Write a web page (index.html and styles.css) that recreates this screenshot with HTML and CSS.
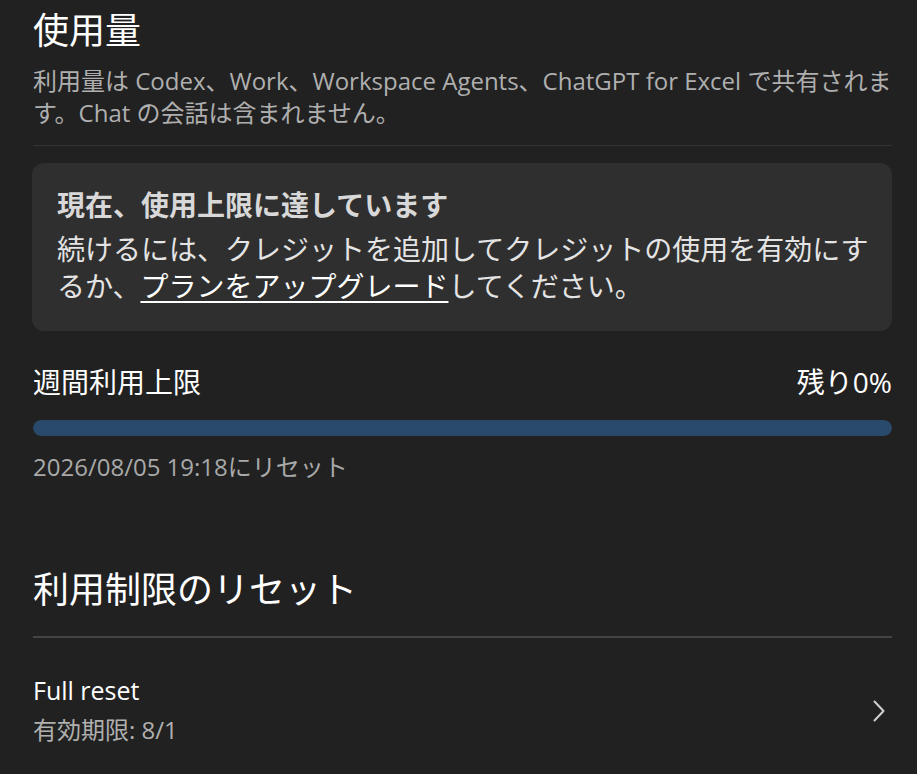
FILE: index.html
```html
<!DOCTYPE html>
<html lang="ja">
<head>
<meta charset="utf-8">
<title>使用量</title>
<link rel="stylesheet" href="styles.css">
</head>
<body>
<main class="page">
  <section class="usage">
    <h1 class="title">使用量</h1>
    <p class="desc">利用量は Codex、Work、Workspace Agents、ChatGPT for Excel で共有されます。Chat の会話は含まれません。</p>
    <hr class="divider">
    <div class="notice">
      <h2 class="notice-title">現在、使用上限に達しています</h2>
      <p class="notice-text">続けるには、クレジットを追加してクレジットの使用を有効にするか、<a class="link" href="#">プランをアップグレード</a>してください。</p>
    </div>
    <div class="limit">
      <div class="limit-head">
        <span class="limit-name">週間利用上限</span>
        <span class="limit-remaining">残り0%</span>
      </div>
      <div class="bar"><div class="bar-fill" style="width:100%"></div></div>
      <p class="limit-reset">2026/08/05 19:18にリセット</p>
    </div>
  </section>
  <section class="resets">
    <h1 class="title title-reset">利用制限のリセット</h1>
    <hr class="divider divider-strong">
    <a class="reset-row" href="#">
      <div class="reset-info">
        <div class="reset-name">Full reset</div>
        <div class="reset-exp">有効期限: 8/1</div>
      </div>
      <svg class="chevron" width="14" height="24" viewBox="0 0 14 24" aria-hidden="true"><path d="M2.5 2.5 L11.5 12 L2.5 21.5" fill="none" stroke="currentColor" stroke-width="2" stroke-linecap="round" stroke-linejoin="round"/></svg>
    </a>
  </section>
</main>
</body>
</html>
```
FILE: styles.css
```css
html, body {
  margin: 0;
  padding: 0;
  background: #212121;
}
body {
  font-family: "Open Sans", "Noto Sans CJK JP", sans-serif;
  color: #ffffff;
}
.page {
  padding: 9px 25px 0 33px;
}
.title {
  margin: 0;
  font-size: 36px;
  line-height: 44px;
  font-weight: 400;
  color: #ffffff;
}
.desc {
  margin: 12px 0 0;
  font-size: 24px;
  line-height: 32px;
  color: #afafaf;
}
.divider {
  margin: 16px 0 0;
  border: 0;
  height: 1px;
  background: #343434;
}
.notice {
  margin-top: 17px;
  margin-left: -1px;
  background: #2f2f2f;
  border-radius: 12px;
  padding: 24px 18px 26px 25px;
}
.notice-title {
  margin: 0 0 7px;
  font-size: 28px;
  line-height: 37px;
  font-weight: 700;
  color: #d8d8d8;
}
.notice-text {
  margin: 0;
  font-size: 28px;
  line-height: 37px;
  color: #e4e4e4;
}
.link {
  color: #ffffff;
  text-decoration: underline;
  text-decoration-thickness: 2px;
  text-underline-offset: 4px;
}
.limit {
  margin-top: 33px;
}
.limit-head {
  display: flex;
  justify-content: space-between;
  align-items: baseline;
  font-size: 28px;
  line-height: 37px;
  color: #ffffff;
}
.bar {
  margin-top: 19px;
  height: 16px;
  border-radius: 8px;
  background: #2a2a2a;
  overflow: hidden;
}
.bar-fill {
  height: 100%;
  background: #294a6b;
  border-radius: 8px;
}
.limit-reset {
  margin: 15px 0 0;
  font-size: 24px;
  line-height: 32px;
  color: #a9a9a9;
}
.title-reset {
  margin-top: 85px;
}
.divider-strong {
  margin-top: 24px;
  height: 2px;
  background: #444444;
}
.reset-row {
  display: flex;
  justify-content: space-between;
  align-items: center;
  padding-top: 35px;
  color: inherit;
  text-decoration: none;
}
.reset-name {
  font-size: 25px;
  line-height: 34px;
  font-weight: 500;
  color: #ffffff;
}
.reset-exp {
  margin-top: 7px;
  font-size: 24px;
  line-height: 32px;
  color: #b0b0b0;
}
.chevron {
  color: #d0d0d0;
  margin-right: 6px;
  margin-top: 2px;
}
```
